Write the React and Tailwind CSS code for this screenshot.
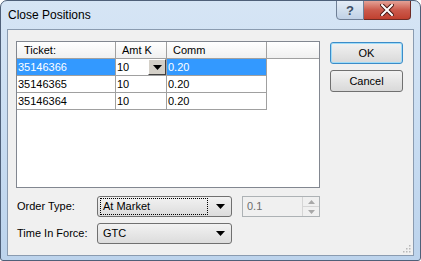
import React from "react";

function Caret({ className = "" }) {
  return (
    <svg width="9" height="5" viewBox="0 0 9 5" className={className}>
      <path d="M0 0 H9 L4.5 5 Z" fill="#000" />
    </svg>
  );
}

function Combo({ text, focused }) {
  return (
    <div className="w-[135px] h-[21px] rounded-[3px] border border-[#707070] bg-gradient-to-b from-[#f2f2f2] to-[#dcdcdc] flex items-center pl-[2px] pr-[6px]">
      <div
        className={
          "flex-1 h-[17px] flex items-center pl-[2px] " +
          (focused ? "border border-dotted border-black" : "border border-transparent")
        }
      >
        <span className="text-[11px] text-black leading-none">{text}</span>
      </div>
      <div className="w-[17px] flex justify-end">
        <Caret />
      </div>
    </div>
  );
}

export default function App() {
  const rows = [
    { t: "35146366", a: "10", c: "0.20", sel: true },
    { t: "35146365", a: "10", c: "0.20" },
    { t: "35146364", a: "10", c: "0.20" },
  ];
  return (
    <div className="w-[421px] h-[261px] flex flex-col border border-[#4f6079] rounded-t-[7px] rounded-b-[3px] bg-gradient-to-b from-[#d6e5f5] via-[#c9ddf2] to-[#bcd3ec] px-[6px] pb-[4px] font-['Liberation_Sans',Arial,sans-serif] overflow-hidden">
      {/* Title bar */}
      <div className="h-[28px] flex items-start">
        <div className="pl-[1px] pt-[7px] text-[12px] text-black leading-[14px]">Close Positions</div>
        <div className="flex-1" />
        <div className="flex -mt-[1px] mr-[3px]">
          <div className="w-[28px] h-[20px] border border-[#6f7f96] rounded-bl-[4px] bg-gradient-to-b from-[#e4ecf6] via-[#d2dfee] to-[#c0d1e6] flex items-center justify-center">
            <span className="text-[13px] font-bold text-[#3d4d63] leading-none">?</span>
          </div>
          <div className="w-[47px] h-[20px] border border-l-0 border-[#6e2b25] rounded-br-[4px] bg-gradient-to-b from-[#e3a196] via-[#cb5a4c] to-[#c0402f] flex items-center justify-center">
            <svg width="14" height="12" viewBox="0 0 14 12">
              <path d="M2 1 L12 11 M12 1 L2 11" stroke="#4a1a15" strokeWidth="4" strokeLinecap="square" />
              <path d="M2 1 L12 11 M12 1 L2 11" stroke="#ffffff" strokeWidth="2" strokeLinecap="square" />
            </svg>
          </div>
        </div>
      </div>

      {/* Client area */}
      <div className="flex-1 border border-[#8a9bb0] bg-[#f0f0f0] pl-[8px] pt-[11px] relative">
        <div className="flex items-start">
          {/* Grid */}
          <div className="w-[304px] h-[147px] border border-[#828790] bg-white flex flex-col">
            <div className="h-[17px] flex border-b border-[#a0a0a0] bg-gradient-to-b from-[#ffffff] to-[#f0f0f0] text-[11px] text-black">
              <div className="w-[99px] border-r border-[#a0a0a0] pl-[7px] flex items-center">Ticket:</div>
              <div className="w-[51px] border-r border-[#a0a0a0] pl-[6px] flex items-center">Amt K</div>
              <div className="w-[100px] border-r border-[#a0a0a0] pl-[6px] flex items-center">Comm</div>
              <div className="flex-1" />
            </div>
            {rows.map((r) => (
              <div key={r.t} className="h-[17px] flex text-[11px]">
                <div
                  className={
                    "w-[99px] border-r border-b border-[#a0a0a0] pl-[1px] flex items-center " +
                    (r.sel ? "bg-[#3399ff] text-white" : "text-black")
                  }
                >
                  {r.t}
                </div>
                <div className="w-[51px] border-r border-b border-[#a0a0a0] pl-[1px] flex items-center text-black">
                  <span className="flex-1">{r.a}</span>
                  {r.sel && (
                    <div className="w-[18px] h-[16px] bg-[#d4d0c8] border border-t-white border-l-white border-r-[#404040] border-b-[#404040] flex items-center justify-center">
                      <Caret />
                    </div>
                  )}
                </div>
                <div
                  className={
                    "w-[100px] border-r border-b border-[#a0a0a0] pl-[1px] flex items-center " +
                    (r.sel ? "bg-[#3399ff] text-white" : "text-black")
                  }
                >
                  {r.c}
                </div>
                <div className="flex-1" />
              </div>
            ))}
          </div>

          {/* Buttons */}
          <div className="ml-[10px] flex flex-col gap-[6px] pt-[1px]">
            <div className="w-[73px] h-[22px] rounded-[3px] border border-[#3c8cc8] shadow-[inset_0_0_0_1px_#9fdcf8] bg-gradient-to-b from-[#f2f2f2] to-[#d9d9d9] flex items-center justify-center text-[11px] text-black">
              OK
            </div>
            <div className="w-[73px] h-[22px] rounded-[3px] border border-[#707070] bg-gradient-to-b from-[#f2f2f2] to-[#d9d9d9] flex items-center justify-center text-[11px] text-black">
              Cancel
            </div>
          </div>
        </div>

        {/* Bottom fields */}
        <div className="mt-[8px] flex items-center">
          <div className="w-[81px] pl-[1px] text-[11px] text-black">Order Type:</div>
          <Combo text="At Market" focused />
          <div className="ml-[10px] w-[78px] h-[21px] border border-[#adb2b5] bg-[#f0f0f0] flex">
            <div className="flex-1 pl-[4px] flex items-center text-[11px] text-[#6d6d6d]">0.1</div>
            <div className="w-[17px] flex flex-col border-l border-[#d5d5d5]">
              <div className="flex-1 flex items-center justify-center border-b border-[#d5d5d5]">
                <svg width="7" height="4" viewBox="0 0 7 4"><path d="M0 4 H7 L3.5 0 Z" fill="#a8a8a8" /></svg>
              </div>
              <div className="flex-1 flex items-center justify-center">
                <svg width="7" height="4" viewBox="0 0 7 4"><path d="M0 0 H7 L3.5 4 Z" fill="#a8a8a8" /></svg>
              </div>
            </div>
          </div>
        </div>
        <div className="mt-[6px] flex items-center">
          <div className="w-[81px] pl-[1px] text-[11px] text-black">Time In Force:</div>
          <Combo text="GTC" />
        </div>

        {/* Resize grip */}
        <svg width="9" height="9" viewBox="0 0 9 9" className="absolute right-[2px] bottom-[2px]">
          {[[7, 1], [4, 4], [7, 4], [1, 7], [4, 7], [7, 7]].map(([x, y]) => (
            <rect key={x + "-" + y} x={x} y={y} width="1.5" height="1.5" fill="#b8b8b8" />
          ))}
        </svg>
      </div>
    </div>
  );
}
